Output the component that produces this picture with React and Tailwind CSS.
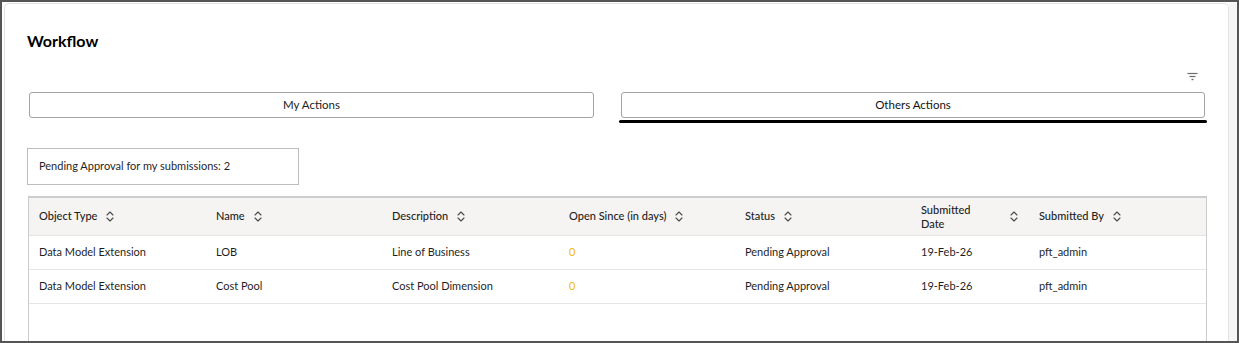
import React from "react";

// Workflow panel: action tabs, a pending-count box and the submissions table.

const COLUMNS = [
  { key: "type", label: "Object Type", w: "w-[177px]" },
  { key: "name", label: "Name", w: "w-[176px]" },
  { key: "desc", label: "Description", w: "w-[177px]" },
  { key: "open", label: "Open Since (in days)", w: "w-[176px]" },
  { key: "status", label: "Status", w: "w-[176px]" },
  { key: "date", label: "Submitted Date", w: "w-[118px]", wrap: true },
  { key: "by", label: "Submitted By", w: "flex-1" },
];

const ROWS = [
  {
    type: "Data Model Extension",
    name: "LOB",
    desc: "Line of Business",
    open: "0",
    status: "Pending Approval",
    date: "19-Feb-26",
    by: "pft_admin",
  },
  {
    type: "Data Model Extension",
    name: "Cost Pool",
    desc: "Cost Pool Dimension",
    open: "0",
    status: "Pending Approval",
    date: "19-Feb-26",
    by: "pft_admin",
  },
];

function SortIcon() {
  return (
    <svg width="8" height="11" viewBox="0 0 8 11" fill="none" className="shrink-0">
      <path d="M1 4 L4 1 L7 4" stroke="#4a4a4a" strokeWidth="1.1" strokeLinecap="round" strokeLinejoin="round" />
      <path d="M1 7 L4 10 L7 7" stroke="#4a4a4a" strokeWidth="1.1" strokeLinecap="round" strokeLinejoin="round" />
    </svg>
  );
}

function FilterIcon() {
  return (
    <svg width="11" height="10" viewBox="0 0 11 10" fill="none">
      <path d="M0.5 1.5 H10.5" stroke="#6b6b6b" strokeWidth="1.2" />
      <path d="M2.5 4.5 H8.5" stroke="#6b6b6b" strokeWidth="1.2" />
      <path d="M4.5 7.5 H6.5" stroke="#6b6b6b" strokeWidth="1.4" />
    </svg>
  );
}

export default function App() {
  return (
    <div
      className="flex h-[343px] w-[1239px] overflow-hidden border-2 border-[#555] bg-white text-[#1f1f1f]"
      style={{ fontFamily: "Lato, 'Noto Sans', sans-serif" }}
    >
      {/* Main panel */}
      <div className="ml-[2px] mt-[1px] w-[1225px] shrink-0 rounded-t-[5px] border border-b-0 border-[#e3e3e3]">
        <h1 className="ml-[22px] mt-[25px] text-[16px] font-bold leading-[24px] text-black">Workflow</h1>

        {/* Filter toggle */}
        <div className="mt-[19px] flex h-[12px] justify-end pr-[30px]">
          <FilterIcon />
        </div>

        {/* Action tabs */}
        <div className="ml-[24px] mt-[8px] flex items-start gap-[25px]">
          <button className="h-[26px] w-[565px] rounded-[3px] border border-[#a3a3a3] text-[11.5px] text-[#222]">
            My Actions
          </button>
          <div className="flex w-[588px] flex-col items-center">
            <button className="h-[26px] w-[584px] rounded-[3px] border border-[#a3a3a3] text-[11.5px] text-[#111]">
              Others Actions
            </button>
            <div className="mt-[2px] h-[3px] w-[588px] rounded-[2px] bg-black" />
          </div>
        </div>

        {/* Pending count */}
        <div className="ml-[22px] mt-[25px] flex h-[37px] w-[272px] items-center border border-[#bdbdbd] pl-[11px] text-[11px]">
          Pending Approval for my submissions: 2
        </div>

        {/* Submissions table */}
        <div className="ml-[23px] mt-[11px] h-[200px] w-[1179px] border border-t-2 border-[#cccccc]">
          <div className="flex h-[38px] items-center border-b border-[#e4e4e4] bg-[#f5f4f2] text-[11px] font-medium">
            {COLUMNS.map((c) => (
              <div key={c.key} className={`${c.w} flex shrink-0 items-center pl-[10px]`}>
                {c.wrap ? (
                  <div className="flex w-full items-center justify-between pr-[11px]">
                    <span className="w-[60px] leading-[14px]">{c.label}</span>
                    <SortIcon />
                  </div>
                ) : (
                  <div className="flex items-center gap-[9px]">
                    <span>{c.label}</span>
                    <SortIcon />
                  </div>
                )}
              </div>
            ))}
          </div>
          {ROWS.map((r, i) => (
            <div key={i} className="flex h-[34px] items-center border-b border-[#e6e6e6] text-[11px]">
              {COLUMNS.map((c) => (
                <div
                  key={c.key}
                  className={`${c.w} shrink-0 pl-[10px] ${c.key === "open" ? "text-[#f2b705]" : ""}`}
                >
                  {r[c.key]}
                </div>
              ))}
            </div>
          ))}
        </div>
      </div>

      {/* Scroll track */}
      <div className="mt-[1px] flex-1 bg-[#f6f6f6]" />
    </div>
  );
}
